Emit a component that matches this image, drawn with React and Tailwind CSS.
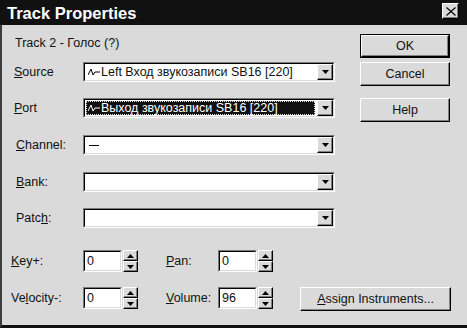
import React from "react";

const Arrow = ({ up = false }) => (
  <svg width="7" height="4" viewBox="0 0 7 4" className="block">
    {up ? <polygon points="0,4 7,4 3.5,0" fill="#000" /> : <polygon points="0,0 7,0 3.5,4" fill="#000" />}
  </svg>
);

const DropBtn = () => (
  <div className="w-[16px] h-full bg-[#dadada] border border-t-white border-l-white border-b-black border-r-black shadow-[inset_-1px_-1px_0_#808080] flex items-center justify-center">
    <Arrow />
  </div>
);

const Wave = ({ color = "#000" }) => (
  <svg width="12" height="10" viewBox="0 0 12 10" className="block mr-[1px]">
    <polyline points="0,8 3,2 5,8 7,5 12,5" fill="none" stroke={color} strokeWidth="1" />
  </svg>
);

const Combo = ({ children, selected = false }) => (
  <div className="w-[252px] h-[20px] border border-t-[#7a7a7a] border-l-[#7a7a7a] border-b-white border-r-white">
    <div className="h-full border border-t-black border-l-black border-b-[#dadada] border-r-[#dadada] bg-white flex items-stretch">
      <div className="flex-1 p-[1px] flex">
        {selected ? (
          <div className="flex-1 bg-[#111] border border-dotted border-[#ddd] text-white flex items-center pl-[1px] mr-[1px]">
            {children}
          </div>
        ) : (
          <div className="flex-1 flex items-center pl-[2px]">{children}</div>
        )}
      </div>
      <DropBtn />
    </div>
  </div>
);

const Label = ({ pre = "", u, post = "", className = "" }) => (
  <span className={className}>
    {pre}
    <span className="underline underline-offset-[1px]">{u}</span>
    {post}
  </span>
);

const Btn = ({ children, def = false, className = "" }) => {
  const inner = (
    <div className="h-full w-full border border-t-white border-l-white border-b-black border-r-black shadow-[inset_-1px_-1px_0_#808080] flex items-center justify-center">
      {children}
    </div>
  );
  return def ? (
    <div className={"border border-black " + className}>{inner}</div>
  ) : (
    <div className={className}>{inner}</div>
  );
};

const Edit = ({ value }) => (
  <div className="flex items-start gap-[1px]">
    <div className="w-[39px] h-[22px] border border-t-[#7a7a7a] border-l-[#7a7a7a] border-b-white border-r-white">
      <div className="h-full border border-t-black border-l-black border-b-[#dadada] border-r-[#dadada] bg-white flex items-center pl-[2px]">
        {value}
      </div>
    </div>
    <div className="w-[15px] h-[22px] flex flex-col">
      <div className="flex-1 bg-[#dadada] border border-t-white border-l-white border-b-black border-r-black shadow-[inset_-1px_-1px_0_#808080] flex items-center justify-center">
        <Arrow up />
      </div>
      <div className="flex-1 bg-[#dadada] border border-t-white border-l-white border-b-black border-r-black shadow-[inset_-1px_-1px_0_#808080] flex items-center justify-center">
        <Arrow />
      </div>
    </div>
  </div>
);

export default function App() {
  return (
    <div className="w-[467px] h-[328px] overflow-hidden bg-[#dadada] text-[#111] font-['Liberation_Sans',Arial,sans-serif] text-[12.5px] leading-[14px]">
      {/* Title bar */}
      <div className="h-[25px] bg-[#111] flex items-start justify-between pl-[7px] pr-[8px]">
        <div className="h-[25px] flex items-center text-white font-bold text-[16.5px] leading-[18px]">Track Properties</div>
        <div className="mt-[3px] w-[17px] h-[16px] bg-[#dadada] border border-t-white border-l-white border-b-black border-r-black shadow-[inset_-1px_-1px_0_#808080] flex items-center justify-center">
          <svg width="10" height="9" viewBox="0 0 10 9" className="block">
            <line x1="0.5" y1="0.5" x2="9.5" y2="8.5" stroke="#000" strokeWidth="1.2" />
            <line x1="9.5" y1="0.5" x2="0.5" y2="8.5" stroke="#000" strokeWidth="1.2" />
          </svg>
        </div>
      </div>

      {/* Body */}
      <div className="h-[303px] border-l-2 border-l-[#3c3c3c] border-b-[3px] border-b-[#111]">
        <div className="flex">
          {/* Left column */}
          <div className="pl-[12px] flex flex-col">
            <div className="mt-[11px] h-[14px] pl-[1px]">Track 2 - Голос (?)</div>
            <div className="mt-[12px] flex items-center">
              <Label u="S" post="ource" className="w-[69px]" />
              <Combo>
                <Wave />
                <span>Left Вход звукозаписи SB16 [220]</span>
              </Combo>
            </div>
            <div className="mt-[16px] flex items-center">
              <Label u="P" post="ort" className="w-[69px]" />
              <Combo selected>
                <Wave color="#fff" />
                <span>Выход звукозаписи SB16 [220]</span>
              </Combo>
            </div>
            <div className="mt-[17px] flex items-center">
              <Label u="C" post="hannel:" className="w-[69px] pl-[2px]" />
              <Combo>
                <span className="block w-[10px] h-[1px] bg-black ml-[1px]" />
              </Combo>
            </div>
            <div className="mt-[17px] flex items-center">
              <Label u="B" post="ank:" className="w-[69px] pl-[2px]" />
              <Combo />
            </div>
            <div className="mt-[16px] flex items-center">
              <Label pre="Patc" u="h" post=":" className="w-[69px] pl-[2px]" />
              <Combo />
            </div>
          </div>

          {/* Right column */}
          <div className="ml-[25px] flex flex-col">
            <Btn def className="mt-[9px] w-[90px] h-[24px]">OK</Btn>
            <Btn className="mt-[4px] w-[90px] h-[24px]">Cancel</Btn>
            <Btn className="mt-[12px] w-[90px] h-[24px]">Help</Btn>
          </div>
        </div>

        {/* Bottom rows */}
        <div className="pl-[9px] mt-[22px] flex items-center">
          <Label u="K" post="ey+:" className="w-[72px]" />
          <Edit value="0" />
          <Label u="P" post="an:" className="ml-[28px] w-[52px]" />
          <Edit value="0" />
        </div>
        <div className="pl-[9px] mt-[15px] flex items-start">
          <div className="h-[22px] flex items-center">
            <Label pre="Ve" u="l" post="ocity-:" className="w-[72px]" />
          </div>
          <Edit value="0" />
          <div className="h-[22px] flex items-center">
            <Label u="V" post="olume:" className="ml-[28px] w-[52px]" />
          </div>
          <Edit value="96" />
          <Btn className="ml-[27px] w-[151px] h-[24px]">
            <Label u="A" post="ssign Instruments..." />
          </Btn>
        </div>
      </div>
    </div>
  );
}
